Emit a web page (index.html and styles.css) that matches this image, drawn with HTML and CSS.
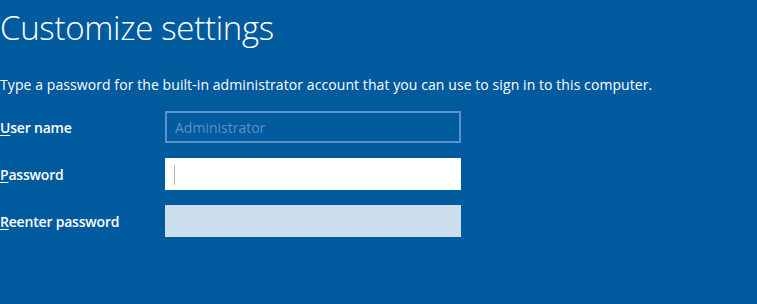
FILE: index.html
```html
<!DOCTYPE html>
<html lang="en">
<head>
    <meta charset="UTF-8">
    <title>Customize settings</title>
    <link rel="stylesheet" href="styles.css">
</head>
<body>
    <div class="page">
        <h1 class="title">Customize settings</h1>
        <p class="intro">Type a password for the built-in administrator account that you can use to sign in to this computer.</p>

        <div class="form">
            <div class="row">
                <label class="label"><u>U</u>ser name</label>
                <div class="field readonly">Administrator</div>
            </div>
            <div class="row">
                <label class="label"><u>P</u>assword</label>
                <div class="field active"><span class="caret"></span></div>
            </div>
            <div class="row">
                <label class="label"><u>R</u>eenter password</label>
                <div class="field disabled"></div>
            </div>
        </div>
    </div>
</body>
</html>
```

FILE: styles.css
```css
html, body {
    margin: 0;
    padding: 0;
    background: #005a9e;
    height: 100%;
}
body {
    font-family: "Open Sans", "Noto Sans", sans-serif;
    color: white;
    overflow: hidden;
}
.page {
    padding: 0;
}
.title {
    font-family: "Open Sans", sans-serif;
    font-weight: 300;
    font-size: 33px;
    line-height: 46px;
    margin: 5px 0 0 0;
    letter-spacing: -0.3px;
}
.intro {
    font-size: 14px;
    line-height: 20px;
    margin: 24px 0 0 0;
    letter-spacing: 0.08px;
}
.form {
    display: flex;
    flex-direction: column;
    gap: 15px;
    margin-top: 16px;
}
.row {
    display: flex;
    align-items: center;
}
.label {
    width: 165px;
    font-size: 14px;
    font-weight: 600;
    letter-spacing: -0.2px;
}
.label u {
    text-decoration-thickness: 1px;
    text-underline-offset: 2px;
}
.field {
    box-sizing: border-box;
    width: 296px;
    height: 32px;
    display: flex;
    align-items: center;
    padding-left: 9px;
    font-size: 14px;
}
.field.readonly {
    border: 2px solid #5d93c6;
    color: #5b93c8;
    padding-left: 8px;
}
.field.active {
    background: #ffffff;
}
.caret {
    display: block;
    width: 1px;
    height: 20px;
    background: #b4b4b4;
    margin-top: 1px;
}
.field.disabled {
    background: #ccdeeb;
}
```
